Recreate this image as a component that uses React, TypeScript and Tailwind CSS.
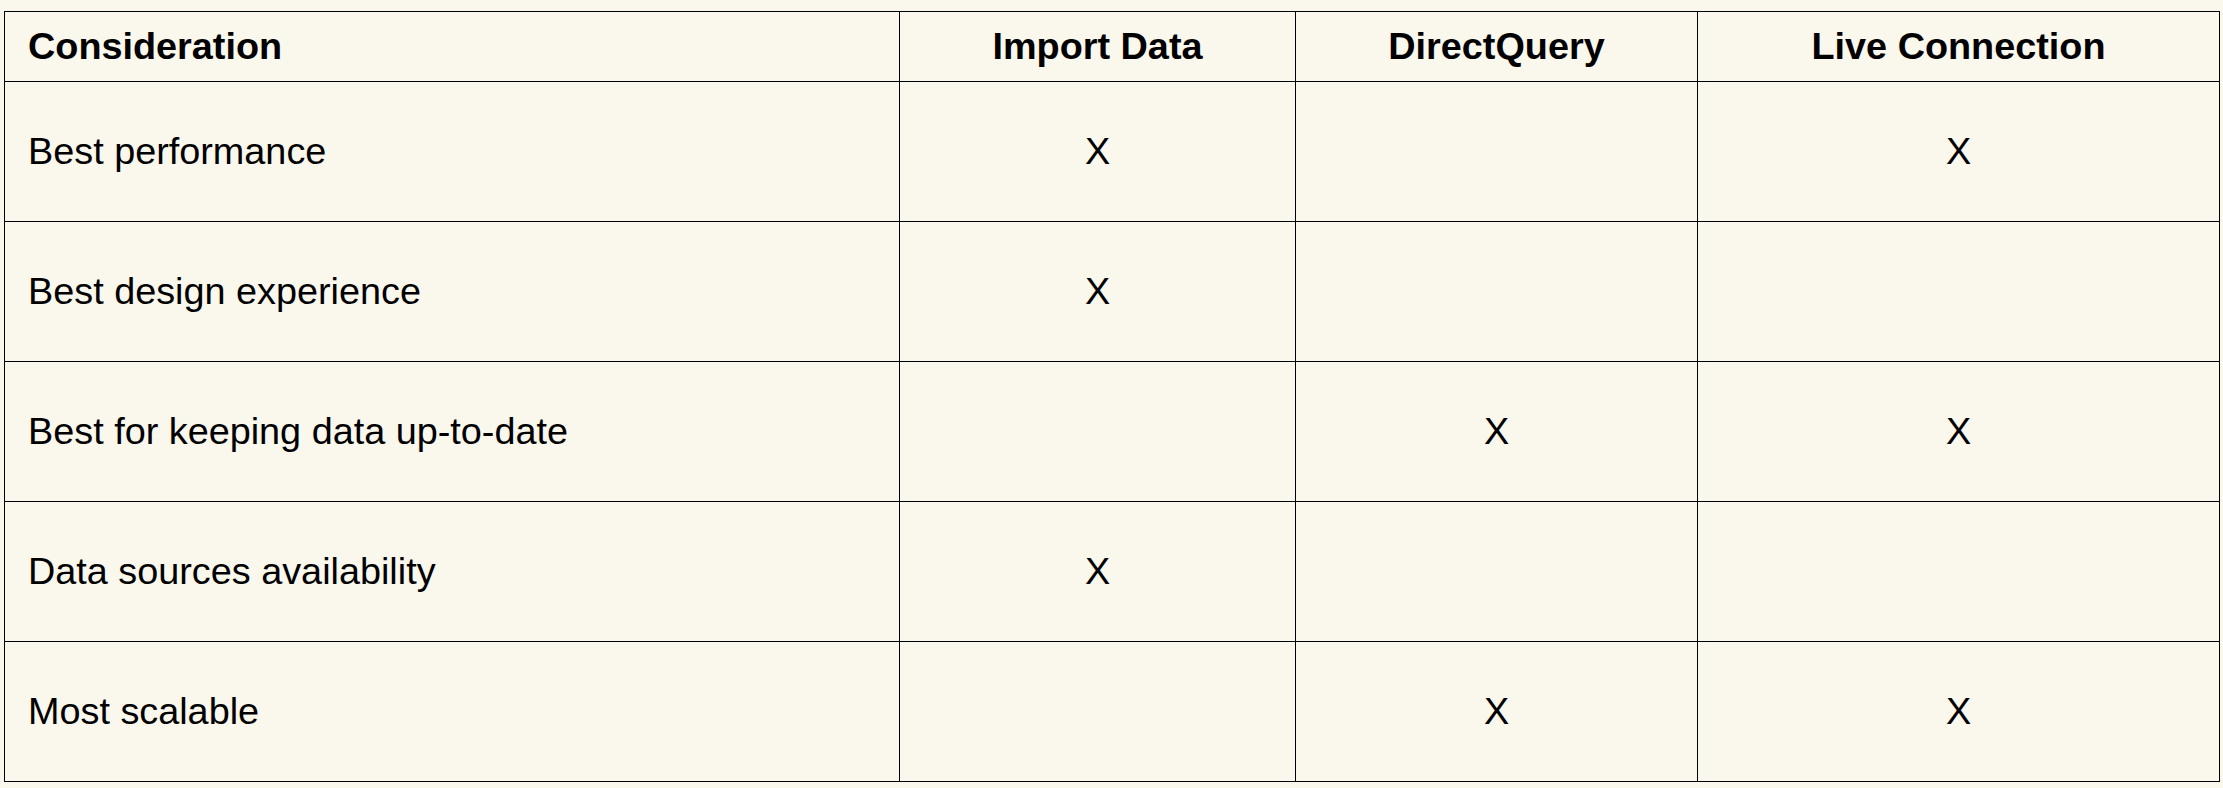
const columns = ['Import Data', 'DirectQuery', 'Live Connection'];

const rows: { label: string; marks: boolean[] }[] = [
  { label: 'Best performance', marks: [true, false, true] },
  { label: 'Best design experience', marks: [true, false, false] },
  { label: 'Best for keeping data up-to-date', marks: [false, true, true] },
  { label: 'Data sources availability', marks: [true, false, false] },
  { label: 'Most scalable', marks: [false, true, true] },
];

export default function App() {
  return (
    <div className="min-h-[788px] w-[2223px] bg-[#faf7ed] pl-[4px] pt-[11px] text-black [font-family:'Liberation_Sans',Arial,sans-serif]">
      <table className="w-[2215px] table-fixed border-collapse text-[37.8px] leading-none">
        <colgroup>
          <col className="w-[895px]" />
          <col className="w-[396px]" />
          <col className="w-[402px]" />
          <col className="w-[522px]" />
        </colgroup>
        <thead>
          {/* Header */}
          <tr className="h-[70px]">
            <th className="border border-black px-[23px] text-left font-bold">Consideration</th>
            {columns.map((c) => (
              <th key={c} className="border border-black text-center font-bold">
                {c}
              </th>
            ))}
          </tr>
        </thead>
        <tbody>
          {rows.map((r) => (
            <tr key={r.label} className="h-[140px]">
              <td className="border border-black px-[23px] text-left">{r.label}</td>
              {r.marks.map((m, i) => (
                <td key={i} className="border border-black text-center">
                  {m ? 'X' : ''}
                </td>
              ))}
            </tr>
          ))}
        </tbody>
      </table>
    </div>
  );
}
